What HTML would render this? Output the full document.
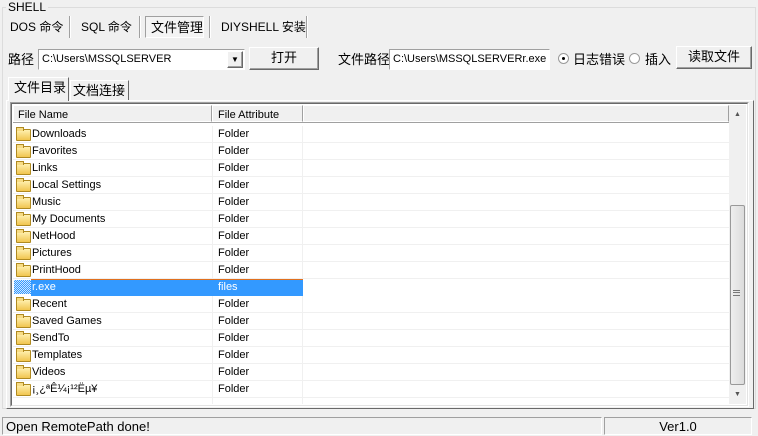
<!DOCTYPE html>
<html><head><meta charset="utf-8"><style>
*{box-sizing:border-box;margin:0;padding:0}
body{width:758px;height:436px;background:#f0f0f0;font-family:"Liberation Sans","Noto Sans CJK SC",sans-serif;font-size:11px;color:#000;position:relative;overflow:hidden}
.a{position:absolute}
.cjk{font-size:12px}
.gb{left:2px;top:7px;width:754px;height:402px;border:1px solid #dcdcdc}
.sunk{border-top:1px solid #a0a0a0;border-left:1px solid #a0a0a0;border-bottom:1px solid #fff;border-right:1px solid #fff}
.btn{background:#f0f0f0;border:1px solid #fff;border-right-color:#696969;border-bottom-color:#696969;box-shadow:inset -1px -1px 0 #a0a0a0;text-align:center}
.sep{width:2px;border-left:1px solid #a0a0a0;border-right:1px solid #fff}
.row{position:absolute;left:0;height:17px;width:716px;border-bottom:1px solid #f0f0f0}
.row span{position:absolute;top:2px}
.fold{position:absolute;left:3px;top:3px;width:15px;height:12px;border:1px solid #b08a20;border-radius:1px;background:linear-gradient(#fff0b0,#f1c650)}
.fold:before{content:"";position:absolute;left:-1px;top:-3px;width:6px;height:3px;border:1px solid #b08a20;border-bottom:none;background:#f7dc86}
.l13{font-size:13px;line-height:15px}
</style></head><body>
<div class="a gb"></div>
<div class="a" style="left:6px;top:0;background:#f0f0f0;padding:0 2px;font-size:12px">SHELL</div>
<div class="a cjk" style="left:10px;top:18px">DOS 命令</div>
<div class="a sep" style="left:69px;top:16px;height:22px"></div>
<div class="a cjk" style="left:81px;top:18px">SQL 命令</div>
<div class="a sep" style="left:139px;top:16px;height:22px"></div>
<div class="a l13" style="left:145px;top:16px;width:59px;height:22px;border:1px solid #a0a0a0;border-right-color:#fff;border-bottom-color:#fff;background:#f4f4f4;padding:3px 0 0 5px">文件管理</div>
<div class="a sep" style="left:209px;top:16px;height:22px"></div>
<div class="a cjk" style="left:221px;top:18px">DIYSHELL 安装</div>
<div class="a sep" style="left:306px;top:16px;height:22px"></div>
<div class="a l13" style="left:8px;top:52px">路径</div>
<div class="a sunk" style="left:38px;top:49px;width:207px;height:21px;background:#fff"><span class="a" style="left:3px;top:3px">C:\Users\MSSQLSERVER</span>
<div class="a btn" style="right:1px;top:1px;width:16px;height:17px;font-size:8px;line-height:15px">▼</div></div>
<div class="a btn l13" style="left:249px;top:47px;width:70px;height:23px;line-height:20px">打开</div>
<div class="a l13" style="left:338px;top:52px">文件路径</div>
<div class="a sunk" style="left:389px;top:49px;width:161px;height:21px;background:#fff"><span class="a" style="left:3px;top:3px">C:\Users\MSSQLSERVERr.exe</span></div>
<div class="a" style="left:558px;top:53px;width:11px;height:11px;border-radius:50%;border:1px solid #999;background:#fff"><div class="a" style="left:3px;top:3px;width:3px;height:3px;background:#000;border-radius:50%"></div></div>
<div class="a l13" style="left:573px;top:52px">日志错误</div>
<div class="a" style="left:629px;top:53px;width:11px;height:11px;border-radius:50%;border:1px solid #999;background:#fff"></div>
<div class="a l13" style="left:645px;top:52px">插入</div>
<div class="a btn l13" style="left:676px;top:46px;width:76px;height:23px;line-height:20px">读取文件</div>
<div class="a" style="left:6px;top:100px;width:748px;height:309px;border:1px solid #fff;border-right-color:#696969;border-bottom-color:#696969"></div>
<div class="a l13" style="left:8px;top:77px;width:61px;height:24px;border:1px solid #fff;border-right-color:#696969;border-bottom:none;background:#f0f0f0;padding:2px 0 0 5px">文件目录</div>
<div class="a l13" style="left:70px;top:80px;width:59px;height:20px;border:1px solid #fff;border-right-color:#696969;border-bottom:none;padding:2px 0 0 2px">文档连接</div>
<div class="a" style="left:10px;top:102px;width:739px;height:305px;border:1px solid #a0a0a0;border-right-color:#fff;border-bottom-color:#fff;background:#fff"></div>
<div class="a" style="left:11px;top:103px;width:737px;height:303px;border:1px solid #696969;border-right-color:#e3e3e3;border-bottom-color:#e3e3e3"></div>
<div class="a" style="left:13px;top:105px;width:716px;height:18px;background:#f0f0f0;border-bottom:1px solid #a0a0a0">
<div class="a" style="left:0;top:0;width:199px;height:17px;border:1px solid #fff;border-right-color:#a0a0a0;padding:3px 0 0 4px">File Name</div>
<div class="a" style="left:199px;top:0;width:91px;height:17px;border:1px solid #fff;border-right-color:#a0a0a0;padding:3px 0 0 5px">File Attribute</div>
<div class="a" style="left:290px;top:0;width:426px;height:17px;border:1px solid #fff;border-right-color:#a0a0a0"></div>
</div>
<div class="a" style="left:13px;top:126px;width:716px;height:278px;overflow:hidden">
<div class="a" style="left:199px;top:0;width:1px;height:280px;background:#f0f0f0"></div>
<div class="a" style="left:289px;top:0;width:1px;height:280px;background:#f0f0f0"></div>
<div class="row" style="top:0"><i class="fold"></i><span style="left:19px">Downloads</span><span style="left:205px">Folder</span></div>
<div class="row" style="top:17px"><i class="fold"></i><span style="left:19px">Favorites</span><span style="left:205px">Folder</span></div>
<div class="row" style="top:34px"><i class="fold"></i><span style="left:19px">Links</span><span style="left:205px">Folder</span></div>
<div class="row" style="top:51px"><i class="fold"></i><span style="left:19px">Local Settings</span><span style="left:205px">Folder</span></div>
<div class="row" style="top:68px"><i class="fold"></i><span style="left:19px">Music</span><span style="left:205px">Folder</span></div>
<div class="row" style="top:85px"><i class="fold"></i><span style="left:19px">My Documents</span><span style="left:205px">Folder</span></div>
<div class="row" style="top:102px"><i class="fold"></i><span style="left:19px">NetHood</span><span style="left:205px">Folder</span></div>
<div class="row" style="top:119px"><i class="fold"></i><span style="left:19px">Pictures</span><span style="left:205px">Folder</span></div>
<div class="row" style="top:136px"><i class="fold"></i><span style="left:19px">PrintHood</span><span style="left:205px">Folder</span></div>
<div class="row" style="top:153px;border:none">
<div class="a" style="left:1px;top:1px;width:17px;height:14px;background:repeating-conic-gradient(#3399ff 0 25%,#cfe6ff 0 50%) 0 0/2px 2px"></div>
<div class="a" style="left:18px;top:0;width:272px;height:17px;background:#3399ff;border-top:1px solid #e07020"></div>
<span style="left:19px;color:#fff">r.exe</span><span style="left:205px;color:#fff">files</span></div>
<div class="row" style="top:170px"><i class="fold"></i><span style="left:19px">Recent</span><span style="left:205px">Folder</span></div>
<div class="row" style="top:187px"><i class="fold"></i><span style="left:19px">Saved Games</span><span style="left:205px">Folder</span></div>
<div class="row" style="top:204px"><i class="fold"></i><span style="left:19px">SendTo</span><span style="left:205px">Folder</span></div>
<div class="row" style="top:221px"><i class="fold"></i><span style="left:19px">Templates</span><span style="left:205px">Folder</span></div>
<div class="row" style="top:238px"><i class="fold"></i><span style="left:19px">Videos</span><span style="left:205px">Folder</span></div>
<div class="row" style="top:255px"><i class="fold"></i><span style="left:19px">¡¸¿ªÊ¼¡¹²Ëµ¥</span><span style="left:205px">Folder</span></div>
</div>
<div class="a" style="left:729px;top:105px;width:17px;height:299px;background:#f0f0f0">
<div class="a" style="left:5px;top:6px;font-size:7px;color:#555">▲</div>
<div class="a" style="left:1px;top:100px;width:15px;height:180px;border:1px solid #999;border-radius:2px;background:linear-gradient(90deg,#eee,#dcdcdc)"></div>
<div class="a" style="left:4px;top:185px;width:7px;height:6px;border-top:1px solid #777;border-bottom:1px solid #777"><div style="margin-top:1px;border-top:1px solid #777"></div></div>
<div class="a" style="left:5px;top:286px;font-size:7px;color:#555">▼</div>
</div>
<div class="a" style="left:0;top:416px;width:758px;height:20px;background:#f0f0f0"></div>
<div class="a sunk" style="left:2px;top:417px;width:600px;height:18px;font-size:13px;padding:0 0 0 3px;line-height:17px">Open RemotePath done!</div>
<div class="a sunk" style="left:604px;top:417px;width:148px;height:18px;font-size:13px;text-align:center;line-height:17px">Ver1.0</div>
</body></html>
